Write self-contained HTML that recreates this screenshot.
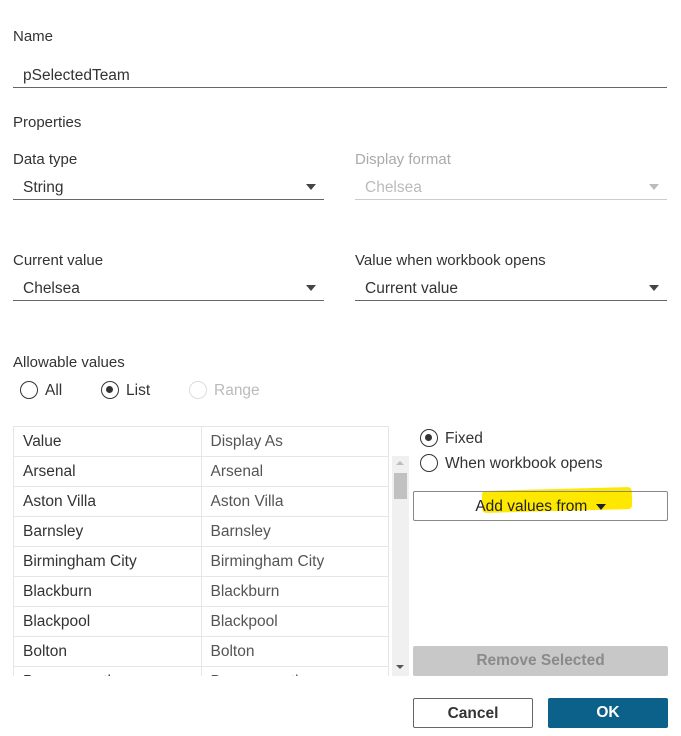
<!DOCTYPE html><html><head><style>
*{box-sizing:border-box;margin:0;padding:0}
body{width:681px;height:736px;background:#fff;font-family:"Liberation Sans",sans-serif;color:#333;position:relative;overflow:hidden;font-size:15.5px}
.a{position:absolute;white-space:nowrap}
.lbl{font-size:15px;color:#333}
.field{position:absolute;border-bottom:1px solid #666;height:26px;padding-left:10px;line-height:27px;font-size:15.5px}
.tri{position:absolute;right:8px;top:10px;width:0;height:0;border-left:5px solid transparent;border-right:5px solid transparent;border-top:6px solid #444}
.rad{position:absolute;width:18px;height:18px;border:1.5px solid #333;border-radius:50%}
.rad.on::after{content:"";position:absolute;left:4px;top:4px;width:7px;height:7px;border-radius:50%;background:#333}
table{border-collapse:collapse;position:absolute;left:13px;top:426px;width:376px;font-size:15.5px}
td{border:1px solid #e6e6e6;height:30px;padding-left:9px;width:188px;color:#333;padding-top:1px}
td.d{color:#555}
.btn{position:absolute;text-align:center;font-size:15.5px}
</style></head><body>
<div class="a lbl" style="left:13px;top:28px">Name</div>
<div class="field" style="left:13px;top:62px;width:654px">pSelectedTeam</div>
<div class="a lbl" style="left:13px;top:114px">Properties</div>
<div class="a lbl" style="left:13px;top:151px">Data type</div>
<div class="a lbl" style="left:355px;top:151px;color:#aaa">Display format</div>
<div class="field" style="left:13px;top:174px;width:311px">String<div class="tri"></div></div>
<div class="field" style="left:355px;top:174px;width:312px;color:#bbb;border-color:#ccc">Chelsea<div class="tri" style="border-top-color:#bbb"></div></div>
<div class="a lbl" style="left:13px;top:252px">Current value</div>
<div class="a lbl" style="left:355px;top:252px">Value when workbook opens</div>
<div class="field" style="left:13px;top:275px;width:311px">Chelsea<div class="tri"></div></div>
<div class="field" style="left:355px;top:275px;width:312px">Current value<div class="tri"></div></div>
<div class="a lbl" style="left:13px;top:354px">Allowable values</div>
<div class="rad" style="left:20px;top:381px"></div><div class="a" style="left:45px;top:382px">All</div>
<div class="rad on" style="left:101px;top:381px"></div><div class="a" style="left:126px;top:382px">List</div>
<div class="rad" style="left:189px;top:381px;border-color:#ddd"></div><div class="a" style="left:214px;top:382px;color:#bbb">Range</div>
<div style="position:absolute;left:13px;top:426px;width:376px;height:250px;overflow:hidden">
<table style="left:0;top:0"><tr><td>Value</td><td class="d">Display As</td></tr>
<tr><td>Arsenal</td><td class="d">Arsenal</td></tr>
<tr><td>Aston Villa</td><td class="d">Aston Villa</td></tr>
<tr><td>Barnsley</td><td class="d">Barnsley</td></tr>
<tr><td>Birmingham City</td><td class="d">Birmingham City</td></tr>
<tr><td>Blackburn</td><td class="d">Blackburn</td></tr>
<tr><td>Blackpool</td><td class="d">Blackpool</td></tr>
<tr><td>Bolton</td><td class="d">Bolton</td></tr>
<tr><td>Bournemouth</td><td class="d">Bournemouth</td></tr></table></div>
<div style="position:absolute;left:392px;top:456px;width:17px;height:220px;background:#f0f0f0"></div>
<div style="position:absolute;left:394px;top:473px;width:13px;height:26px;background:#c1c1c1"></div>
<div class="a" style="left:396px;top:461px;border-left:4px solid transparent;border-right:4px solid transparent;border-bottom:4px solid #bbb"></div>
<div class="a" style="left:396px;top:665px;border-left:4px solid transparent;border-right:4px solid transparent;border-top:4px solid #555"></div>
<div class="rad on" style="left:420px;top:429px"></div><div class="a" style="left:445px;top:430px">Fixed</div>
<div class="rad" style="left:420px;top:454px"></div><div class="a" style="left:445px;top:455px">When workbook opens</div>
<div style="position:absolute;left:482px;top:489px;width:150px;height:22px;background:#ffe800;border-radius:4px;transform:rotate(-1.5deg)"></div>
<div class="btn" style="left:413px;top:491px;width:255px;height:30px;border:1px solid #888;border-radius:2px;line-height:29px;color:#222">Add values from <span style="display:inline-block;width:0;height:0;border-left:5px solid transparent;border-right:5px solid transparent;border-top:6px solid #222;vertical-align:middle;margin-left:4px"></span></div>
<div class="btn" style="left:413px;top:646px;width:255px;height:30px;background:#c8c8c8;border-radius:2px;line-height:30px;color:#8a8a8a;font-weight:bold">Remove Selected</div>
<div class="btn" style="left:413px;top:698px;width:120px;height:30px;border:1px solid #666;border-radius:2px;line-height:29px;color:#333;font-weight:bold">Cancel</div>
<div class="btn" style="left:548px;top:698px;width:120px;height:30px;background:#0b6189;border-radius:2px;line-height:30px;color:#fff;font-weight:bold">OK</div>
</body></html>
